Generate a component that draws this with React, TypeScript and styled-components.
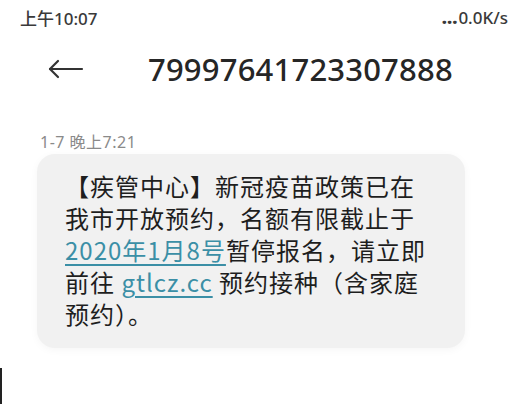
import React from "react";
import styled, { createGlobalStyle } from "styled-components";

const Global = createGlobalStyle`
  html, body { margin: 0; padding: 0; background: #ffffff; }
  body { font-family: "Noto Sans", "Noto Sans CJK SC", sans-serif; }
`;

const Page = styled.div`
  width: 515px;
  height: 404px;
  overflow: hidden;
  display: flex;
  flex-direction: column;
  background: #ffffff;
`;

const StatusBar = styled.div`
  height: 34px;
  display: flex;
  align-items: center;
  justify-content: space-between;
  padding: 0 7px 0 20px;
  font-family: "Noto Sans", "Noto Sans CJK SC", sans-serif;
  font-size: 17px;
  font-weight: 500;
  color: #3a3a3a;
  box-sizing: border-box;
`;

const Dots = styled.span`
  font-weight: 900;
  font-size: 18px;
  letter-spacing: 0px;
  margin-right: 1px;
`;

const Header = styled.div`
  margin-top: 15px;
  height: 40px;
  display: flex;
  align-items: center;
  padding-left: 48px;
`;

const BackIcon = styled.svg`
  width: 36px;
  height: 20px;
  flex: none;
`;

const Number = styled.div`
  margin-left: 64px;
  font-family: "Noto Sans", sans-serif;
  font-size: 31px;
  font-weight: 500;
  color: #262626;
  letter-spacing: 0.2px;
`;

const Stamp = styled.div`
  margin-top: 44px;
  padding-left: 40px;
  height: 18px;
  line-height: 18px;
  font-size: 16px;
  letter-spacing: 0.5px;
  color: #8a8a8a;
  font-family: "Noto Sans", "Noto Sans CJK SC", sans-serif;
`;

const Bubble = styled.div`
  margin: 3px 0 0 37px;
  width: 428px;
  box-sizing: border-box;
  padding: 16px 10px 18px 28px;
  background: #f1f1f1;
  border-radius: 18px;
  box-shadow: 0 2px 8px rgba(0, 0, 0, 0.04);
  font-family: "Noto Sans CJK SC", sans-serif;
  font-size: 24px;
  font-weight: 400;
  line-height: 32px;
  letter-spacing: 1px;
  color: #1e1e1e;
`;

const Line = styled.div`
  white-space: nowrap;
`;

const Link = styled.span`
  color: #3b8fa6;
  text-decoration: underline;
  text-decoration-thickness: 2px;
  text-underline-offset: 4px;
`;

const Cursor = styled.div`
  margin-top: 20px;
  width: 2px;
  height: 36px;
  background: #222;
`;

export default function App() {
  return (
    <>
      <Global />
      <Page>
        <StatusBar>
          <span>上午10:07</span>
          <span>
            <Dots>...</Dots>0.0K/s
          </span>
        </StatusBar>
        <Header>
          <BackIcon viewBox="0 0 36 20" fill="none" stroke="#333" strokeWidth="2.2" strokeLinecap="round" strokeLinejoin="round">
            <path d="M2 10 H34" />
            <path d="M10 2 L2 10 L10 18" />
          </BackIcon>
          <Number>79997641723307888</Number>
        </Header>
        <Stamp>1-7 晚上7:21</Stamp>
        <Bubble>
          <Line>【疾管中心】新冠疫苗政策已在</Line>
          <Line>我市开放预约，名额有限截止于</Line>
          <Line>
            <Link>2020年1月8号</Link>暂停报名，请立即
          </Line>
          <Line>
            前往 <Link>gtlcz.cc</Link> 预约接种（含家庭
          </Line>
          <Line>预约）。</Line>
        </Bubble>
        <Cursor />
      </Page>
    </>
  );
}
